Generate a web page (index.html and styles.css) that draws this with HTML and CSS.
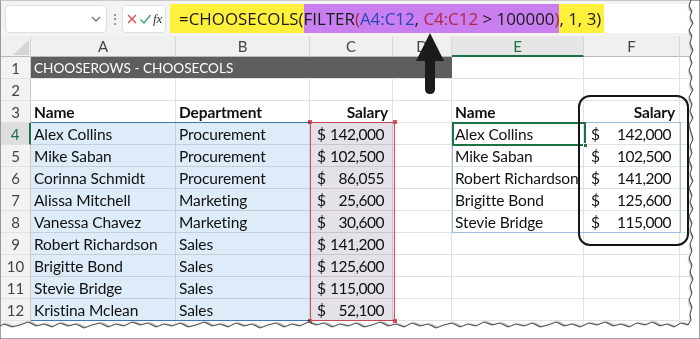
FILE: index.html
```html
<!DOCTYPE html>
<html>
<head>
<meta charset="utf-8">
<link rel="stylesheet" href="styles.css">
</head>
<body>
<div class="page">
  <div class="fbar">
    <div class="namebox"><svg class="chev" width="10" height="6" viewBox="0 0 10 6"><path d="M1 1 L5 5 L9 1" fill="none" stroke="#666" stroke-width="1.2"/></svg></div>
    <div class="dots">&#8942;</div>
    <div class="fxbox">
      <svg width="12" height="12" viewBox="0 0 12 12"><path d="M2 2 L10 10 M10 2 L2 10" stroke="#e0474c" stroke-width="1.3" fill="none"/></svg>
      <svg width="13" height="12" viewBox="0 0 13 12"><path d="M1.5 6.5 L5 10 L11.5 2" stroke="#3e9a6a" stroke-width="1.3" fill="none"/></svg>
      <span class="fx">fx</span>
    </div>
    <div class="formula">
      <span class="hl-y">=CHOOSECOLS(</span><span class="hl-p">FILTER<span class="red">(</span><span class="blue">A4:C12</span>, <span class="crim">C4:C12</span> &gt; 100000<span class="red">)</span></span><span class="hl-y2">, 1, 3)</span>
    </div>
  </div>

  <div class="grid">
    <div class="ch corner"><span class="tri"></span></div>
    <div class="ch">A</div><div class="ch">B</div><div class="ch">C</div><div class="ch">D</div><div class="ch sel">E</div><div class="ch">F</div><div class="ch"></div>

    <div class="rh">1</div><div class="banner">CHOOSEROWS - CHOOSECOLS</div><div class="c"></div><div class="c"></div><div class="c"></div>
    <div class="rh">2</div><div class="c"></div><div class="c"></div><div class="c"></div><div class="c"></div><div class="c"></div><div class="c"></div><div class="c"></div>
    <div class="rh">3</div><div class="c b">Name</div><div class="c b">Department</div><div class="c b r">Salary</div><div class="c"></div><div class="c b">Name</div><div class="c b r">Salary</div><div class="c"></div>

    <div class="rh sel">4</div><div class="c">Alex Collins</div><div class="c">Procurement</div><div class="c m"><span>$</span><span>142,000</span></div><div class="c"></div><div class="c">Alex Collins</div><div class="c m"><span>$</span><span>142,000</span></div><div class="c"></div>
    <div class="rh">5</div><div class="c">Mike Saban</div><div class="c">Procurement</div><div class="c m"><span>$</span><span>102,500</span></div><div class="c"></div><div class="c">Mike Saban</div><div class="c m"><span>$</span><span>102,500</span></div><div class="c"></div>
    <div class="rh">6</div><div class="c">Corinna Schmidt</div><div class="c">Procurement</div><div class="c m"><span>$</span><span>86,055</span></div><div class="c"></div><div class="c">Robert Richardson</div><div class="c m"><span>$</span><span>141,200</span></div><div class="c"></div>
    <div class="rh">7</div><div class="c">Alissa Mitchell</div><div class="c">Marketing</div><div class="c m"><span>$</span><span>25,600</span></div><div class="c"></div><div class="c">Brigitte Bond</div><div class="c m"><span>$</span><span>125,600</span></div><div class="c"></div>
    <div class="rh">8</div><div class="c">Vanessa Chavez</div><div class="c">Marketing</div><div class="c m"><span>$</span><span>30,600</span></div><div class="c"></div><div class="c">Stevie Bridge</div><div class="c m"><span>$</span><span>115,000</span></div><div class="c"></div>
    <div class="rh">9</div><div class="c">Robert Richardson</div><div class="c">Sales</div><div class="c m"><span>$</span><span>141,200</span></div><div class="c"></div><div class="c"></div><div class="c"></div><div class="c"></div>
    <div class="rh">10</div><div class="c">Brigitte Bond</div><div class="c">Sales</div><div class="c m"><span>$</span><span>125,600</span></div><div class="c"></div><div class="c"></div><div class="c"></div><div class="c"></div>
    <div class="rh">11</div><div class="c">Stevie Bridge</div><div class="c">Sales</div><div class="c m"><span>$</span><span>115,000</span></div><div class="c"></div><div class="c"></div><div class="c"></div><div class="c"></div>
    <div class="rh">12</div><div class="c">Kristina Mclean</div><div class="c">Sales</div><div class="c m"><span>$</span><span>52,100</span></div><div class="c"></div><div class="c"></div><div class="c"></div><div class="c"></div>
    <div class="rh">13</div><div class="c"></div><div class="c"></div><div class="c"></div><div class="c"></div><div class="c"></div><div class="c"></div><div class="c"></div>

    <div class="rng-blue"></div>
    <div class="rng-red"><i class="k tl"></i><i class="k tr"></i><i class="k bl"></i><i class="k br"></i></div>
    <div class="rng-out"></div>
    <div class="active"><i class="handle"></i></div>
    <div class="ring"></div>
  </div>

  <svg class="arrow" width="32" height="62" viewBox="0 0 32 62">
    <path d="M16 0 L30 28 L21 28 L21 56 Q21 61 16 61 Q11 61 11 56 L11 28 L2 28 Z" fill="#1b1b1b"/>
  </svg>

  <svg class="torn" width="700" height="339" viewBox="0 0 700 339">
    <defs>
      <filter id="blur" x="-10%" y="-10%" width="120%" height="120%"><feGaussianBlur stdDeviation="1.3"/></filter>
    </defs>
    <path filter="url(#blur)" transform="translate(2 2)" fill="none" stroke="#505050" stroke-width="3.5"
      d="M691 0 L689 6 L692 11 L690 17 L693 23 L689 30 L692 36 L690 43 L693 50 L690 57 L692 63 L689 70 L692 77 L690 84 L693 90 L689 97 L692 104 L690 111 L693 118 L689 125 L691 132 L693 139 L690 146 L692 153 L689 160 L692 167 L690 174 L693 181 L689 188 L692 195 L690 202 L693 209 L689 216 L692 223 L690 230 L693 237 L690 244 L692 251 L689 258 L692 265 L690 272 L693 279 L690 286 L692 293 L689 300 L692 307 L690 314 L691 320 L688 325 L681 323 L674 327 L667 324 L660 326 L652 322 L645 325 L637 323 L629 327 L621 324 L613 326 L605 322 L597 325 L589 323 L580 327 L572 324 L564 326 L556 322 L548 325 L540 327 L532 323 L524 326 L516 324 L508 327 L500 323 L492 325 L484 322 L476 326 L468 324 L460 327 L452 323 L444 325 L436 328 L428 324 L420 326 L412 323 L404 327 L396 324 L388 326 L380 322 L372 325 L364 327 L356 323 L348 326 L340 324 L332 327 L324 323 L316 325 L308 322 L300 326 L292 324 L284 327 L276 323 L268 325 L260 328 L252 324 L244 326 L236 323 L228 327 L220 324 L212 326 L204 322 L196 325 L188 327 L180 323 L172 326 L164 324 L156 327 L148 323 L140 325 L132 322 L124 326 L116 324 L108 327 L100 323 L92 325 L84 328 L76 324 L68 326 L60 323 L52 327 L44 324 L36 326 L28 322 L20 325 L12 327 L4 324 L0 326"/>
    <path fill="#ffffff" stroke="#4a4a4a" stroke-width="1"
      d="M700 0 L691 0 L689 6 L692 11 L690 17 L693 23 L689 30 L692 36 L690 43 L693 50 L690 57 L692 63 L689 70 L692 77 L690 84 L693 90 L689 97 L692 104 L690 111 L693 118 L689 125 L691 132 L693 139 L690 146 L692 153 L689 160 L692 167 L690 174 L693 181 L689 188 L692 195 L690 202 L693 209 L689 216 L692 223 L690 230 L693 237 L690 244 L692 251 L689 258 L692 265 L690 272 L693 279 L690 286 L692 293 L689 300 L692 307 L690 314 L691 320 L688 325 L681 323 L674 327 L667 324 L660 326 L652 322 L645 325 L637 323 L629 327 L621 324 L613 326 L605 322 L597 325 L589 323 L580 327 L572 324 L564 326 L556 322 L548 325 L540 327 L532 323 L524 326 L516 324 L508 327 L500 323 L492 325 L484 322 L476 326 L468 324 L460 327 L452 323 L444 325 L436 328 L428 324 L420 326 L412 323 L404 327 L396 324 L388 326 L380 322 L372 325 L364 327 L356 323 L348 326 L340 324 L332 327 L324 323 L316 325 L308 322 L300 326 L292 324 L284 327 L276 323 L268 325 L260 328 L252 324 L244 326 L236 323 L228 327 L220 324 L212 326 L204 322 L196 325 L188 327 L180 323 L172 326 L164 324 L156 327 L148 323 L140 325 L132 322 L124 326 L116 324 L108 327 L100 323 L92 325 L84 328 L76 324 L68 326 L60 323 L52 327 L44 324 L36 326 L28 322 L20 325 L12 327 L4 324 L0 326 L0 339 L700 339 Z"/>
  </svg>
</div>
</body>
</html>
```

FILE: styles.css
```css
* { box-sizing: border-box; }
html, body { margin: 0; padding: 0; background: #fff; }
body { width: 700px; height: 339px; overflow: hidden; }

.page {
  position: relative;
  width: 700px;
  height: 339px;
  border-left: 1px solid #9a9a9a;
  border-top: 1px solid #c8c8c8;
  font-family: "Lato", "Liberation Sans", sans-serif;
  color: #111;
}

/* formula bar */
.fbar {
  height: 35px;
  display: flex;
  align-items: center;
  padding: 3px 0 3px 4px;
  background: #f3f3f3;
}
.namebox {
  width: 102px;
  height: 28px;
  background: #fff;
  border: 1px solid #e0e0e0;
  border-radius: 4px;
  display: flex;
  align-items: center;
  justify-content: flex-end;
  padding-right: 5px;
}
.dots { width: 15px; text-align: center; color: #777; font-size: 14px; }
.fxbox {
  width: 44px;
  height: 28px;
  background: #fff;
  border: 1px solid #e0e0e0;
  border-radius: 4px;
  display: flex;
  align-items: center;
  justify-content: space-around;
  padding: 0 2px;
}
.fx { font-family: "Liberation Serif", serif; font-style: italic; font-size: 13px; color: #333; }
.formula {
  flex: 1;
  height: 29px;
  margin-left: 4px;
  background: #fff;
  display: flex;
  align-items: stretch;
  font-family: "Open Sans", "Liberation Sans", sans-serif;
  font-size: 16.9px;
  color: #1a1a1a;
  white-space: pre;
}
.formula > span { display: flex; align-items: center; }
.hl-y { background: #fff03c; padding-left: 9px; }
.hl-y2 { background: #fff03c; padding-right: 3px; }
.hl-p { background: #c97ff0; }
.red { color: #b3213a; }
.blue { color: #2448b8; }
.crim { color: #b32645; }

/* grid */
.grid {
  position: relative;
  display: grid;
  grid-template-columns: 30px 145px 134px 83px 59px 132px 96px 1fr;
  grid-template-rows: 21px repeat(13, 22px);
  font-size: 15.5px;
}
.ch {
  background: #f0f0f0;
  border-right: 1px solid #d8d8d8;
  border-bottom: 1px solid #b9b9b9;
  display: flex;
  align-items: center;
  justify-content: center;
  font-size: 15px;
  color: #444;
}
.ch.sel { color: #1e7145; border-bottom: 2px solid #1e7145; background: #e6e6e6; }
.corner { position: relative; }
.tri {
  position: absolute;
  right: 1px; bottom: 1px;
  width: 0; height: 0;
  border-left: 16px solid transparent;
  border-bottom: 15px solid #d4d4d4;
}
.rh {
  background: #f3f3f3;
  border-right: 1px solid #c9c9c9;
  border-bottom: 1px solid #e2e2e2;
  display: flex;
  align-items: center;
  justify-content: center;
  color: #444;
  font-size: 15px;
}
.rh.sel { color: #1e7145; background: #dedede; border-right: 2px solid #1e7145; }
.c {
  border-right: 1px solid #e1e1e1;
  border-bottom: 1px solid #e1e1e1;
  padding: 0 3px;
  display: flex;
  align-items: center;
  white-space: nowrap;
  overflow: visible;
  letter-spacing: -0.1px;
}
.b { font-weight: 700; }
.r { justify-content: flex-end; padding-right: 4px; }
.m { justify-content: space-between; padding: 0 8px 0 7px; }
.m span:last-child { letter-spacing: -0.5px; }
.banner {
  grid-column: span 4;
  background: #5e5e5e;
  color: #fff;
  display: flex;
  align-items: center;
  padding-left: 3px;
  font-size: 13.6px;
  border-bottom: 1px solid #e1e1e1;
}

/* range highlights (overlays) */
.rng-blue {
  position: absolute;
  left: 30px; top: 86px;
  width: 279px; height: 199px;
  background: rgb(222, 235, 248);
  mix-blend-mode: multiply;
  border-top: 1.5px solid #3f88c5;
  border-bottom: 1.5px solid #3f88c5;
}
.rng-red {
  position: absolute;
  left: 309px; top: 86px;
  width: 85px; height: 199px;
  background: rgb(229, 225, 232);
  mix-blend-mode: multiply;
  border: 1.5px solid #e0505a;
}
.k { position: absolute; width: 4px; height: 4px; background: #e0505a; }
.tl { left: -3px; top: -3px; }
.tr { right: -3px; top: -3px; }
.bl { left: -3px; bottom: -3px; }
.br { right: -3px; bottom: -3px; }
.rng-out {
  position: absolute;
  left: 451px; top: 86px;
  width: 229px; height: 111px;
  border: 1px solid #9bbbe0;
}
.active {
  position: absolute;
  left: 451px; top: 86px;
  width: 134px; height: 24px;
  border: 2px solid #1e7145;
}
.handle { position: absolute; right: -4px; bottom: -4px; width: 5px; height: 5px; background: #1e7145; border: 1px solid #fff; }
.ring {
  position: absolute;
  left: 577px; top: 59px;
  width: 111px; height: 151px;
  border: 2.5px solid #151515;
  border-radius: 12px;
}

.arrow { position: absolute; left: 413px; top: 32px; }
.torn { position: absolute; left: -1px; top: -1px; }
```
